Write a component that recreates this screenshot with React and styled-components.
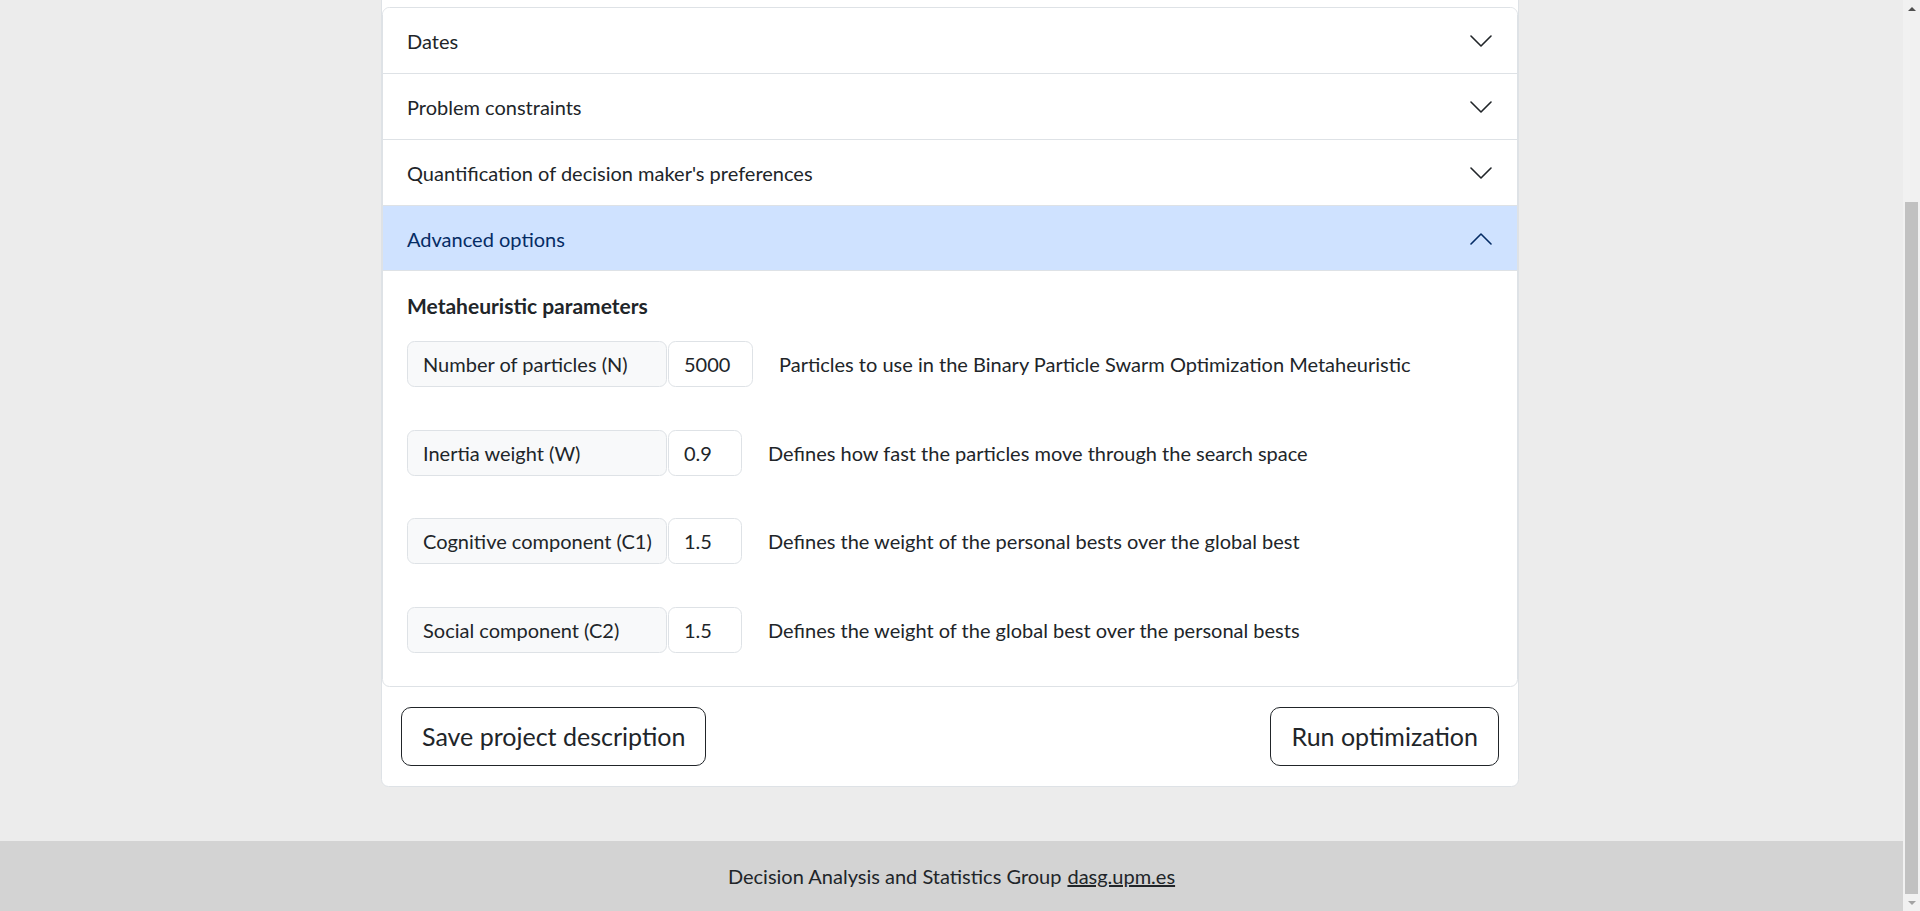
import React, { useLayoutEffect, useEffect, useRef, useState, useCallback } from "react";
import styled, { createGlobalStyle } from "styled-components";

const GlobalStyle = createGlobalStyle`
  html, body {
    margin: 0;
    height: 100%;
    overflow: hidden;
  }
  body {
    background: #ececec;
    font-family: Lato, "Liberation Sans", sans-serif;
    font-size: 20px;
    line-height: 1.5;
    color: #212529;
  }
  *, *::before, *::after { box-sizing: border-box; }
`;

const Shell = styled.div`
  display: flex;
  height: 100vh;
`;

const Viewport = styled.div`
  flex: 1;
  min-width: 0;
  height: 100%;
  overflow-y: scroll;
  overflow-x: hidden;
  scrollbar-width: none;
  &::-webkit-scrollbar {
    display: none;
  }
`;

const ScrollRail = styled.div`
  flex: 0 0 17px;
  display: flex;
  flex-direction: column;
  background: #f1f1f1;
`;

const RailButton = styled.div`
  flex: 0 0 17px;
  display: flex;
  align-items: center;
  justify-content: center;
`;

const RailArrow = styled.span`
  width: 0;
  height: 0;
  border-left: 4px solid transparent;
  border-right: 4px solid transparent;
  ${(p) =>
    p.$dir === "up"
      ? `border-bottom: 4px solid ${p.$muted ? "#a3a3a3" : "#505050"};`
      : `border-top: 4px solid ${p.$muted ? "#a3a3a3" : "#505050"};`}
`;

const RailTrack = styled.div`
  flex: 1;
  display: flex;
  flex-direction: column;
`;

const RailThumb = styled.div`
  margin-left: 2px;
  margin-right: 2px;
  background: #c1c1c1;
`;

const Page = styled.div`
  display: flex;
  flex-direction: column;
`;

const Main = styled.main`
  padding: 24px 3px 54px 0;
`;

const Card = styled.section`
  width: 1138px;
  margin: 0 auto;
  background: #fff;
  border: 1px solid #dee2e6;
  border-radius: 7.5px;
`;

const CardLead = styled.div`
  height: 225px;
`;

const Accordion = styled.div`
  border: 1px solid #dee2e6;
  border-radius: 7.5px;
  overflow: hidden;
`;

const Item = styled.div`
  & + & {
    border-top: 1px solid #dee2e6;
  }
`;

const HeaderButton = styled.button`
  display: flex;
  align-items: center;
  justify-content: space-between;
  width: 100%;
  height: 65px;
  padding: 0 25px 0 24px;
  border: 0;
  margin: 0;
  font: inherit;
  font-size: 20px;
  text-align: left;
  cursor: pointer;
  background: ${(p) => (p.$open ? "#cfe2ff" : "#fff")};
  color: ${(p) => (p.$open ? "#052c65" : "#212529")};
  box-shadow: ${(p) => (p.$open ? "inset 0 -1px 0 #dee2e6" : "none")};
`;

const ChevronIcon = styled.svg`
  flex: 0 0 auto;
  width: 22px;
  height: 14px;
  transform: ${(p) => (p.$open ? "rotate(180deg)" : "none")};
`;

const Body = styled.div`
  padding: 20px 25px 33px 24px;
`;

const SectionTitle = styled.h6`
  margin: 0 0 20px;
  font-size: 21px;
  font-weight: 700;
  line-height: 30px;
`;

const ParamList = styled.div`
  display: flex;
  flex-direction: column;
  gap: 42.5px;
`;

const ParamRow = styled.div`
  display: flex;
  align-items: center;
`;

const ParamLabel = styled.label`
  display: flex;
  align-items: center;
  width: 260px;
  height: 46px;
  padding: 0 15px;
  background: #f8f9fa;
  border: 1px solid #dee2e6;
  border-radius: 7.5px;
  white-space: nowrap;
`;

const ParamInput = styled.input`
  width: ${(p) => p.$w}px;
  height: 46px;
  margin: 0 0 0 1px;
  padding: 0 15px;
  font: inherit;
  font-size: 20px;
  color: #212529;
  background: #fff;
  border: 1px solid #dee2e6;
  border-radius: 7.5px;
  outline: none;
`;

const ParamHelp = styled.span`
  margin-left: 26px;
`;

const Actions = styled.div`
  display: flex;
  justify-content: space-between;
  padding: 20px 19px;
`;

const OutlineButton = styled.button`
  height: 59px;
  padding: 0 20px;
  font: inherit;
  font-size: 25px;
  line-height: 37px;
  color: #212529;
  background: transparent;
  border: 1px solid #212529;
  border-radius: 10px;
  cursor: pointer;
`;

const Footer = styled.footer`
  display: flex;
  align-items: center;
  justify-content: center;
  height: 70px;
  background: #d3d3d3;
  font-size: 20px;
  gap: 6px;
`;

const FooterLink = styled.a`
  color: #212529;
  text-decoration: underline;
`;

function Chevron({ open }) {
  return (
    <ChevronIcon $open={open} viewBox="0 0 22 14" fill="none">
      <polyline
        points="1,2 11,12 21,2"
        stroke="currentColor"
        strokeWidth="1.6"
        strokeLinecap="round"
        strokeLinejoin="round"
      />
    </ChevronIcon>
  );
}

const sections = [
  "Dates",
  "Problem constraints",
  "Quantification of decision maker's preferences",
  "Advanced options",
];

const params = [
  { label: "Number of particles (N)", value: "5000", w: 85, help: "Particles to use in the Binary Particle Swarm Optimization Metaheuristic" },
  { label: "Inertia weight (W)", value: "0.9", w: 74, help: "Defines how fast the particles move through the search space" },
  { label: "Cognitive component (C1)", value: "1.5", w: 74, help: "Defines the weight of the personal bests over the global best" },
  { label: "Social component (C2)", value: "1.5", w: 74, help: "Defines the weight of the global best over the personal bests" },
];

export default function App() {
  const scroller = useRef(null);
  const track = useRef(null);
  const [thumb, setThumb] = useState({ top: 0, size: 0, atEnd: false, atStart: true });

  const measure = useCallback(() => {
    const el = scroller.current;
    const tr = track.current;
    if (!el || !tr) return;
    const len = tr.clientHeight;
    const size = (el.clientHeight / el.scrollHeight) * len;
    const top = (el.scrollTop / el.scrollHeight) * len;
    const atEnd = el.scrollTop + el.clientHeight >= el.scrollHeight - 1;
    setThumb({ top, size, atEnd, atStart: el.scrollTop <= 0 });
  }, []);

  const toBottom = useCallback(() => {
    const el = scroller.current;
    if (el) el.scrollTop = el.scrollHeight;
    measure();
  }, [measure]);

  useLayoutEffect(() => {
    toBottom();
  }, [toBottom]);
  useEffect(() => {
    toBottom();
    const t = setTimeout(toBottom, 50);
    return () => clearTimeout(t);
  }, [toBottom]);

  return (
    <>
      <GlobalStyle />
      <Shell>
        <Viewport ref={scroller} onScroll={measure}>
          <Page>
            <Main>
              <Card>
                <CardLead />
                <Accordion>
                  {sections.map((title) => {
                    const open = title === "Advanced options";
                    return (
                      <Item key={title}>
                        <HeaderButton type="button" $open={open}>
                          <span>{title}</span>
                          <Chevron open={open} />
                        </HeaderButton>
                        {open && (
                          <Body>
                            <SectionTitle>Metaheuristic parameters</SectionTitle>
                            <ParamList>
                              {params.map((p) => (
                                <ParamRow key={p.label}>
                                  <ParamLabel>{p.label}</ParamLabel>
                                  <ParamInput type="text" defaultValue={p.value} $w={p.w} />
                                  <ParamHelp>{p.help}</ParamHelp>
                                </ParamRow>
                              ))}
                            </ParamList>
                          </Body>
                        )}
                      </Item>
                    );
                  })}
                </Accordion>
                <Actions>
                  <OutlineButton type="button">Save project description</OutlineButton>
                  <OutlineButton type="button">Run optimization</OutlineButton>
                </Actions>
              </Card>
            </Main>
            <Footer>
              <span>Decision Analysis and Statistics Group</span>
              <FooterLink href="#">dasg.upm.es</FooterLink>
            </Footer>
          </Page>
        </Viewport>
        <ScrollRail aria-hidden="true">
          <RailButton>
            <RailArrow $dir="up" $muted={thumb.atStart} />
          </RailButton>
          <RailTrack ref={track}>
            <RailThumb style={{ marginTop: thumb.top, height: thumb.size }} />
          </RailTrack>
          <RailButton>
            <RailArrow $dir="down" $muted={thumb.atEnd} />
          </RailButton>
        </ScrollRail>
      </Shell>
    </>
  );
}
